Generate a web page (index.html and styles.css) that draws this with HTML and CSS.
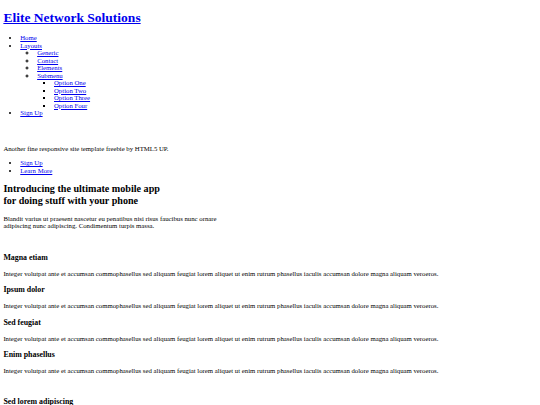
FILE: index.html
```html
<!DOCTYPE html>
<html lang="en">
<head>
<meta charset="utf-8">
<title>Elite Network Solutions</title>
<link rel="stylesheet" href="styles.css">
</head>
<body class="page">
<header class="site-header">
  <h1 class="site-title"><a href="#">Elite Network Solutions</a></h1>
  <nav class="site-nav">
    <ul class="nav-list">
      <li><a href="#">Home</a></li>
      <li><a href="#">Layouts</a>
        <ul class="nav-sub level-2">
          <li><a href="#">Generic</a></li>
          <li><a href="#">Contact</a></li>
          <li><a href="#">Elements</a></li>
          <li><a href="#">Submenu</a>
            <ul class="nav-sub level-3">
              <li><a href="#">Option One</a></li>
              <li><a href="#">Option Two</a></li>
              <li><a href="#">Option Three</a></li>
              <li><a href="#">Option Four</a></li>
            </ul>
          </li>
        </ul>
      </li>
      <li><a href="#">Sign Up</a></li>
    </ul>
  </nav>
</header>

<section class="banner">
  <h2 class="banner-logo">&nbsp;</h2>
  <p class="text">Another fine responsive site template freebie by HTML5 UP.</p>
  <ul class="actions">
    <li><a href="#">Sign Up</a></li>
    <li><a href="#">Learn More</a></li>
  </ul>
</section>

<section class="main">
  <section class="box">
    <header class="major">
      <h2 class="major-title">Introducing the ultimate mobile app<br>for doing stuff with your phone</h2>
      <p class="text">Blandit varius ut praesent nascetur eu penatibus nisi risus faucibus nunc ornare<br>adipiscing nunc adipiscing. Condimentum turpis massa.</p>
    </header>
    <div class="image-slot image-slot-lead"></div>
  </section>

  <section class="features">
    <section class="feature">
      <h3 class="feature-title">Magna etiam</h3>
      <p class="text">Integer volutpat ante et accumsan commophasellus sed aliquam feugiat lorem aliquet ut enim rutrum phasellus iaculis accumsan dolore magna aliquam veroeros.</p>
    </section>
    <section class="feature">
      <h3 class="feature-title">Ipsum dolor</h3>
      <p class="text">Integer volutpat ante et accumsan commophasellus sed aliquam feugiat lorem aliquet ut enim rutrum phasellus iaculis accumsan dolore magna aliquam veroeros.</p>
    </section>
    <section class="feature">
      <h3 class="feature-title">Sed feugiat</h3>
      <p class="text">Integer volutpat ante et accumsan commophasellus sed aliquam feugiat lorem aliquet ut enim rutrum phasellus iaculis accumsan dolore magna aliquam veroeros.</p>
    </section>
    <section class="feature">
      <h3 class="feature-title">Enim phasellus</h3>
      <p class="text">Integer volutpat ante et accumsan commophasellus sed aliquam feugiat lorem aliquet ut enim rutrum phasellus iaculis accumsan dolore magna aliquam veroeros.</p>
    </section>
  </section>

  <section class="box">
    <div class="image-slot"></div>
    <h3 class="feature-title">Sed lorem adipiscing</h3>
    <p class="text">Lorem ipsum dolor sit amet sed feugiat lorem aliquet ut enim rutrum phasellus iaculis accumsan dolore magna aliquam veroeros.</p>
  </section>
</section>
</body>
</html>
```

FILE: styles.css
```css
html {
  background: #fff;
}
.page {
  margin: 3.375px;
  font-family: "Liberation Serif", "Times New Roman", serif;
  font-size: 6.75px;
  line-height: 7.55px;
  color: #000;
}
a {
  color: #0000ee;
}
.site-title {
  font-size: 2em;
  line-height: 15.6px;
  margin: 6.5px 0 8.5px;
}
.nav-list,
.actions {
  margin: 1em 0;
  padding-left: 16.875px;
  list-style-type: disc;
}
.nav-sub {
  margin: 0;
  padding-left: 16.875px;
}
.level-2 {
  list-style-type: circle;
}
.level-3 {
  list-style-type: square;
}
.banner-logo,
.major-title {
  font-size: 1.5em;
  line-height: 11.4px;
  margin: 0.83em 0;
}
.major-title {
  margin-top: 8.9px;
}
.text {
  margin: 1em 0;
}
.image-slot {
  height: 7.55px;
}
.image-slot-lead {
  height: 8.3px;
}
.feature-title {
  font-size: 1.17em;
  line-height: 9.2px;
  margin: 1em 0;
}
```
